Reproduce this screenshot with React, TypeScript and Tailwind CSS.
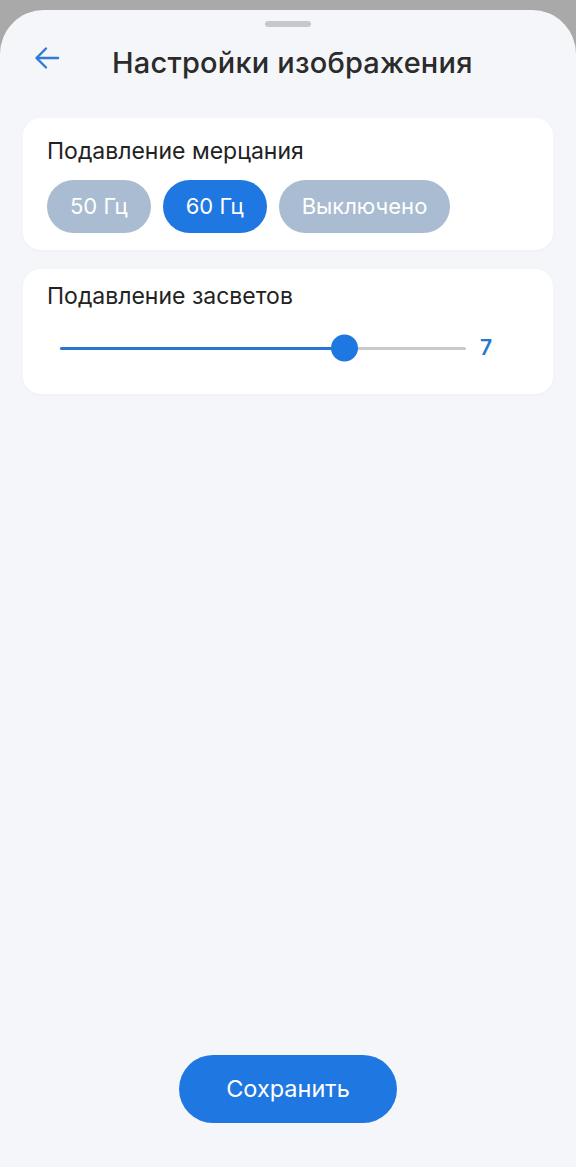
import React from "react";

const font = { fontFamily: "Inter, 'Noto Sans', sans-serif" };

const BackArrow: React.FC = () => (
  <svg width="26" height="24" viewBox="0 0 26 24" fill="none" stroke="#2f7bd6" strokeWidth="2.4" strokeLinecap="round" strokeLinejoin="round">
    <path d="M24 12H3" />
    <path d="M12 2.5L2.5 12L12 21.5" />
  </svg>
);

const options = ["50 Гц", "60 Гц", "Выключено"];

const App: React.FC = () => {
  const active = 1;
  const value = 7;
  const pct = (value / 10) * 100;

  return (
    <div className="w-[576px] h-[1167px] bg-[#a9a9a9] pt-[10px] overflow-hidden" style={font}>
      <div className="h-full bg-[#f4f6f9] rounded-t-[44px] flex flex-col">
        <div className="mx-auto mt-[11px] w-[46px] h-[6px] rounded-full bg-[#c6c8cd]" />

        <div className="flex items-start mt-[18px] pl-[34px]">
          <div className="mt-[1px]">
            <BackArrow />
          </div>
          <h1 className="ml-[52px] text-[29px] leading-[36px] font-medium text-[#2b2b2b] tracking-[0.2px]">Настройки изображения</h1>
        </div>

        <div className="mx-[23px] mt-[37px] bg-white rounded-[18px] shadow-[0_1px_3px_rgba(0,0,0,0.03)] px-[24px] pt-[19px] pb-[17px]">
          <div className="text-[23px] leading-[28px] text-[#222]">Подавление мерцания</div>
          <div className="flex gap-[12px] mt-[15px]">
            {options.map((o, i) => (
              <div
                key={o}
                className={
                  "h-[53px] px-[23px] rounded-full flex items-center text-[22px] text-white " +
                  (i === active ? "bg-[#1f77e1]" : "bg-[#aabcd1]")
                }
              >
                {o}
              </div>
            ))}
          </div>
        </div>

        <div className="mx-[23px] mt-[19px] bg-white rounded-[18px] shadow-[0_1px_3px_rgba(0,0,0,0.03)] px-[24px] pt-[13px] pb-[31px]">
          <div className="text-[23px] leading-[28px] text-[#222]">Подавление засветов</div>
          <div className="flex items-center mt-[23px] h-[30px]">
            <div className="relative ml-[13px] w-[406px] h-[3px] bg-[#c9c9c9] rounded-full">
              <div className="h-full bg-[#2876d3] rounded-full" style={{ width: pct + "%" }} />
              <div
                className="absolute top-1/2 w-[27px] h-[27px] -ml-[13.5px] -translate-y-1/2 rounded-full bg-[#1f77e1]"
                style={{ left: pct + "%" }}
              />
            </div>
            <span className="ml-[14px] text-[21px] font-semibold text-[#2a76cf]">{value}</span>
          </div>
        </div>

        <div className="flex-1" />

        <div className="flex justify-center mb-[44px]">
          <button className="w-[218px] h-[68px] rounded-full bg-[#1f77e1] text-white text-[23.5px]">Сохранить</button>
        </div>
      </div>
    </div>
  );
};

export default App;
